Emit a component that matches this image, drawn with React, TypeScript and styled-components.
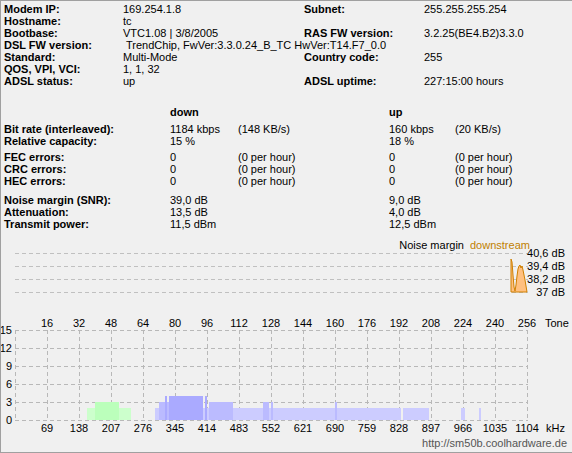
import { Fragment } from 'react';
import styled, { createGlobalStyle } from 'styled-components';

const GlobalStyle = createGlobalStyle`
  body {
    margin: 0;
    background: #f0f0f0;
    font-family: "Liberation Sans", Arial, sans-serif;
    font-size: 11px;
    color: #000;
  }
`;

const Frame = styled.div`
  width: 572px;
  height: 453px;
  box-sizing: border-box;
  border-top: 1px solid #a0a0a0;
  border-left: 1px solid #a0a0a0;
  border-bottom: 1px solid #a0a0a0;
  background: #f0f0f0;
  padding: 2px 0 0 3px;
  overflow: hidden;
`;

const InfoGrid = styled.div`
  display: grid;
  grid-template-columns: 119px 181px 120px 1fr;
  grid-auto-rows: 12px;
  line-height: 12px;
  white-space: nowrap;
`;

const Label = styled.div<{ $row: number; $col: number }>`
  font-weight: bold;
  grid-row: ${(p) => p.$row};
  grid-column: ${(p) => p.$col};
`;

const Value = styled.div<{ $row: number; $col: number; $span?: boolean; $indent?: boolean }>`
  grid-row: ${(p) => p.$row};
  grid-column: ${(p) => (p.$span ? `${p.$col} / -1` : p.$col)};
  padding-left: ${(p) => (p.$indent ? '3px' : '0')};
`;

const StatsTable = styled.div`
  margin-top: 19px;
  display: flex;
  flex-direction: column;
`;

const StatRow = styled.div<{ $gap?: number; $head?: boolean }>`
  display: grid;
  grid-template-columns: 166px 68px 151px 66px 1fr;
  height: 12px;
  line-height: 12px;
  margin-top: ${(p) => p.$gap ?? 0}px;
  font-weight: ${(p) => (p.$head ? 'bold' : 'normal')};
  white-space: nowrap;
`;

const StatLabel = styled.div`
  font-weight: bold;
`;

const Chart = styled.svg`
  display: block;
  margin: 6px 0 0 -3px;
  font-family: "Liberation Sans", Arial, sans-serif;
  font-size: 11px;
`;

const Footer = styled.div`
  text-align: right;
  padding-right: 5px;
  line-height: 15px;
  color: #555;
  font-size: 11px;
`;

const top: [number, number, string, string, boolean?, boolean?][] = [
  [1, 1, 'Modem IP:', '169.254.1.8'],
  [2, 1, 'Hostname:', 'tc'],
  [3, 1, 'Bootbase:', 'VTC1.08 | 3/8/2005'],
  [4, 1, 'DSL FW version:', 'TrendChip, FwVer:3.3.0.24_B_TC HwVer:T14.F7_0.0', true, true],
  [5, 1, 'Standard:', 'Multi-Mode'],
  [6, 1, 'QOS, VPI, VCI:', '1, 1, 32'],
  [7, 1, 'ADSL status:', 'up'],
  [1, 3, 'Subnet:', '255.255.255.254'],
  [3, 3, 'RAS FW version:', '3.2.25(BE4.B2)3.3.0'],
  [5, 3, 'Country code:', '255'],
  [7, 3, 'ADSL uptime:', '227:15:00 hours'],
];

const stats: { label: string; cells: string[]; gap?: number }[] = [
  { label: 'Bit rate (interleaved):', cells: ['1184 kbps', '(148 KB/s)', '160 kbps', '(20 KB/s)'], gap: 5 },
  { label: 'Relative capacity:', cells: ['15 %', '', '18 %', ''] },
  { label: 'FEC errors:', cells: ['0', '(0 per hour)', '0', '(0 per hour)'], gap: 4 },
  { label: 'CRC errors:', cells: ['0', '(0 per hour)', '0', '(0 per hour)'] },
  { label: 'HEC errors:', cells: ['0', '(0 per hour)', '0', '(0 per hour)'] },
  { label: 'Noise margin (SNR):', cells: ['39,0 dB', '', '9,0 dB', ''], gap: 7 },
  { label: 'Attenuation:', cells: ['13,5 dB', '', '4,0 dB', ''] },
  { label: 'Transmit power:', cells: ['11,5 dBm', '', '12,5 dBm', ''] },
];

const tones = Array.from({ length: 16 }, (_, i) => (i + 1) * 16);
const tx = (t: number) => 15 + t * 2;
const vy = (v: number) => 420 - v * 6;

// spectrum bars: [x1, x2, height, colour]
const bars: [number, number, number, string][] = [
  [87, 131, 2, '#ccffcc'],
  [95, 119, 3, '#bbffbb'],
  [155, 401, 2, '#ccccff'],
  [403, 429, 2, '#ccccff'],
  [461, 465, 2, '#ccccff'],
  [479, 481, 2, '#ccccff'],
  [159, 203, 3, '#bbbbff'],
  [209, 233, 3, '#bbbbff'],
  [263, 269, 3, '#bbbbff'],
  [271, 273, 3, '#bbbbff'],
  [335, 337, 3, '#bbbbff'],
  [165, 167, 4, '#aaaaff'],
  [169, 203, 4, '#aaaaff'],
  [205, 207, 4, '#aaaaff'],
];

const noisePts =
  '511,292 511,259 512,262 513,275 514,287 515,291 516,285 517,276 518,269 519,266 520,265 521,268 522,266 523,270 524,275 525,280 526,286 527,292';

export default function App() {
  return (
    <Frame>
      <GlobalStyle />
      <InfoGrid>
        {top.map(([row, col, label, value, span, indent]) => (
          <Fragment key={label}>
            <Label $row={row} $col={col}>{label}</Label>
            <Value $row={row} $col={col + 1} $span={span} $indent={indent}>{value}</Value>
          </Fragment>
        ))}
      </InfoGrid>

      <StatsTable>
        <StatRow $head>
          <div />
          <div>down</div>
          <div />
          <div>up</div>
          <div />
        </StatRow>
        {stats.map((s) => (
          <StatRow key={s.label} $gap={s.gap}>
            <StatLabel>{s.label}</StatLabel>
            {s.cells.map((c, i) => (
              <div key={i}>{c}</div>
            ))}
          </StatRow>
        ))}
      </StatsTable>

      <Chart width={570} height={200} viewBox="1 236 570 200">
        {/* noise margin chart */}
        <text x={464} y={249} textAnchor="end" fill="#000">Noise margin</text>
        <text x={470} y={249} fill="#c08000">downstream</text>
        {[253, 266, 279, 292].map((y) => (
          <line key={y} x1={15} x2={528} y1={y + 0.5} y2={y + 0.5} stroke="#c0c0c0" strokeDasharray="4 3" />
        ))}
        {['40,6 dB', '39,4 dB', '38,2 dB', '37 dB'].map((t, i) => (
          <text key={t} x={565} y={257 + i * 13} textAnchor="end">{t}</text>
        ))}
        <polygon points={noisePts} fill="#ffc080" stroke="#d08000" strokeWidth={1} />

        {/* tone axis */}
        {tones.map((t) => (
          <text key={t} x={tx(t)} y={327} textAnchor="middle">{t}</text>
        ))}
        <text x={545} y={327}>Tone</text>

        {/* spectrum grid */}
        {[0, 3, 6, 9, 12, 15].map((v) => (
          <g key={v}>
            <line x1={15} x2={528} y1={vy(v) + 0.5} y2={vy(v) + 0.5} stroke="#b8b8b8" strokeDasharray="4 3" />
            <text x={12} y={vy(v) + 4} textAnchor="end">{v}</text>
          </g>
        ))}
        {Array.from({ length: 17 }, (_, i) => tx(i * 16)).map((x) => (
          <line key={x} x1={x + 0.5} x2={x + 0.5} y1={330} y2={420} stroke="#b8b8b8" strokeDasharray="4 3" />
        ))}
        {bars.map(([x1, x2, h, c], i) => (
          <rect key={i} x={x1} y={vy(h)} width={x2 - x1} height={h * 6} fill={c} />
        ))}

        {/* kHz axis */}
        {tones.map((t) => (
          <text key={t} x={tx(t)} y={432} textAnchor="middle">{Math.round(t * 4.3125)}</text>
        ))}
        <text x={546} y={432}>kHz</text>
      </Chart>
      <Footer>http://sm50b.coolhardware.de</Footer>
    </Frame>
  );
}
